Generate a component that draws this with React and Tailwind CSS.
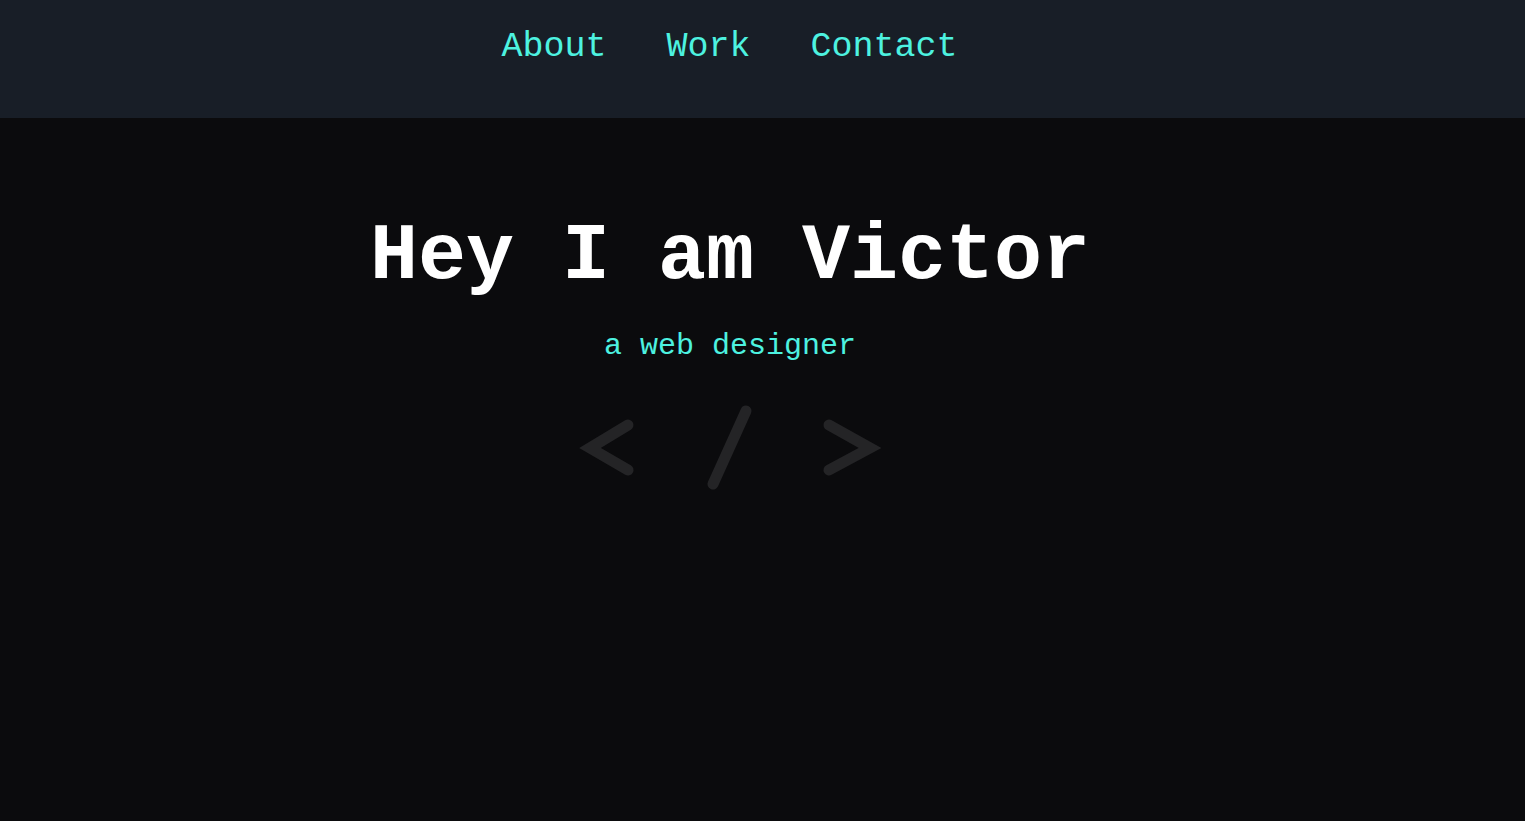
export default function App() {
  const mono = { fontFamily: '"Liberation Mono", "Courier New", monospace' };
  return (
    <div className="min-h-[821px] bg-[#0b0b0d]" style={mono}>
      <nav className="h-[118px] bg-[#181e27] pr-[66px]">
        <ul className="flex justify-center pt-[25px] text-[35px] leading-[44px] text-[#4df2e0]">
          <li><a href="#">About</a></li>
          <li className="ml-[60px]"><a href="#">Work</a></li>
          <li className="ml-[60px]"><a href="#">Contact</a></li>
        </ul>
      </nav>
      <main className="flex flex-col items-center pr-[65px]">
        <h1 className="mt-[94px] text-[80px] font-bold leading-[90px] text-white">Hey I am Victor</h1>
        <p className="mt-[26px] text-[30px] leading-[36px] text-[#4df2e0]">a web designer</p>
        <svg width="320" height="100" viewBox="0 0 320 100" className="mt-[38px]" fill="none" stroke="#242426" strokeWidth="11" strokeLinecap="round">
          <polyline points="58,23 20,46 58,68" strokeLinejoin="miter" strokeMiterlimit="10" />
          <line x1="176" y1="9" x2="143" y2="82" />
          <polyline points="259,23 300,46 259,68" strokeLinejoin="miter" strokeMiterlimit="10" />
        </svg>
      </main>
    </div>
  );
}
